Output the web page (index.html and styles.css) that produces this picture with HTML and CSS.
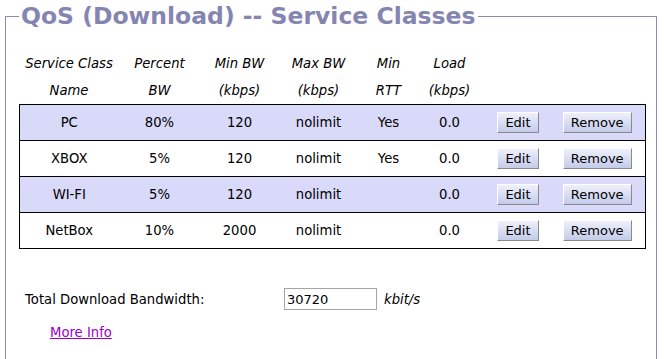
FILE: index.html
```html
<!DOCTYPE html>
<html>
<head>
<meta charset="utf-8">
<title>QoS (Download) -- Service Classes</title>
<link rel="stylesheet" href="styles.css">
</head>
<body>
<fieldset class="panel">
  <legend class="panel-title">QoS (Download) -- Service Classes</legend>
  <table class="classes">
    <colgroup>
      <col class="c-name"><col class="c-pct"><col class="c-min"><col class="c-max"><col class="c-rtt"><col class="c-load"><col class="c-edit"><col class="c-rem">
    </colgroup>
    <thead>
      <tr class="head">
        <th>Service Class</th><th>Percent</th><th>Min BW</th><th>Max BW</th><th>Min</th><th>Load</th><th></th><th></th>
      </tr>
      <tr class="head">
        <th>Name</th><th>BW</th><th>(kbps)</th><th>(kbps)</th><th>RTT</th><th>(kbps)</th><th></th><th></th>
      </tr>
    </thead>
    <tbody>
      <tr class="row shaded">
        <td>PC</td><td>80%</td><td>120</td><td>nolimit</td><td>Yes</td><td>0.0</td>
        <td><button class="btn">Edit</button></td><td class="rem"><button class="btn">Remove</button></td>
      </tr>
      <tr class="row">
        <td>XBOX</td><td>5%</td><td>120</td><td>nolimit</td><td>Yes</td><td>0.0</td>
        <td><button class="btn">Edit</button></td><td class="rem"><button class="btn">Remove</button></td>
      </tr>
      <tr class="row shaded">
        <td>WI-FI</td><td>5%</td><td>120</td><td>nolimit</td><td></td><td>0.0</td>
        <td><button class="btn">Edit</button></td><td class="rem"><button class="btn">Remove</button></td>
      </tr>
      <tr class="row">
        <td>NetBox</td><td>10%</td><td>2000</td><td>nolimit</td><td></td><td>0.0</td>
        <td><button class="btn">Edit</button></td><td class="rem"><button class="btn">Remove</button></td>
      </tr>
    </tbody>
  </table>

  <div class="total">
    <span class="total-label">Total Download Bandwidth:</span>
    <input class="total-input" type="text" value="30720">
    <span class="unit">kbit/s</span>
  </div>
  <div class="more"><a href="#" class="more-link">More Info</a></div>
</fieldset>
</body>
</html>
```

FILE: styles.css
```css
html, body {
  margin: 0;
  padding: 0;
  background: #ffffff;
}
body {
  font-family: "DejaVu Sans", Verdana, sans-serif;
  font-size: 13.2px;
  color: #000;
  padding: 1px 0 0 5px;
  width: 652px;
}
.panel {
  margin: 0;
  border: 1px solid #8a8ab8;
  padding: 19px 10px 20px 13px;
  min-width: 0;
}
.panel-title {
  font-family: "DejaVu Sans", Verdana, sans-serif;
  font-size: 23.5px;
  font-weight: bold;
  color: #8585b3;
  padding: 0 2px;
  line-height: 30px;
}
.classes {
  width: 626px;
  border-collapse: collapse;
  table-layout: fixed;
}
.c-name { width: 99px; }
.c-pct { width: 82px; }
.c-min { width: 78px; }
.c-max { width: 80px; }
.c-rtt { width: 60px; }
.c-load { width: 62px; }
.c-edit { width: 75px; }
.c-rem { width: 90px; }
.head th {
  font-weight: normal;
  font-style: italic;
  height: 27px;
  padding: 0;
  text-align: center;
  vertical-align: middle;
}
.row td {
  height: 35px;
  padding: 0;
  text-align: center;
  vertical-align: middle;
}
.row td.rem {
  padding-right: 6px;
}
.row {
  border: 1px solid #000;
}
.shaded {
  background: #d9d9f9;
}
.btn {
  font-family: "DejaVu Sans", Verdana, sans-serif;
  font-size: 13px;
  color: #000;
  background: linear-gradient(#eef0fb, #c3cbea);
  border: 1px solid;
  border-color: #ffffff #8a8a8a #8a8a8a #ffffff;
  padding: 1px 7px;
  height: 21px;
  line-height: 17px;
  margin: 0;
}
.total {
  display: flex;
  align-items: center;
  margin-top: 39px;
  padding-left: 6px;
}
.total-label {
  width: 259px;
}
.total-input {
  width: 87px;
  height: 20px;
  border: 1px solid #a5a5a5;
  padding: 0 2px;
  margin: 0;
  font-family: "DejaVu Sans", Verdana, sans-serif;
  font-size: 13px;
  color: #000;
  box-sizing: content-box;
}
.unit {
  font-style: italic;
  margin-left: 7px;
}
.more {
  margin-top: 15px;
  padding-left: 31px;
}
.more-link {
  color: #9a00c8;
  text-decoration: underline;
}
```
